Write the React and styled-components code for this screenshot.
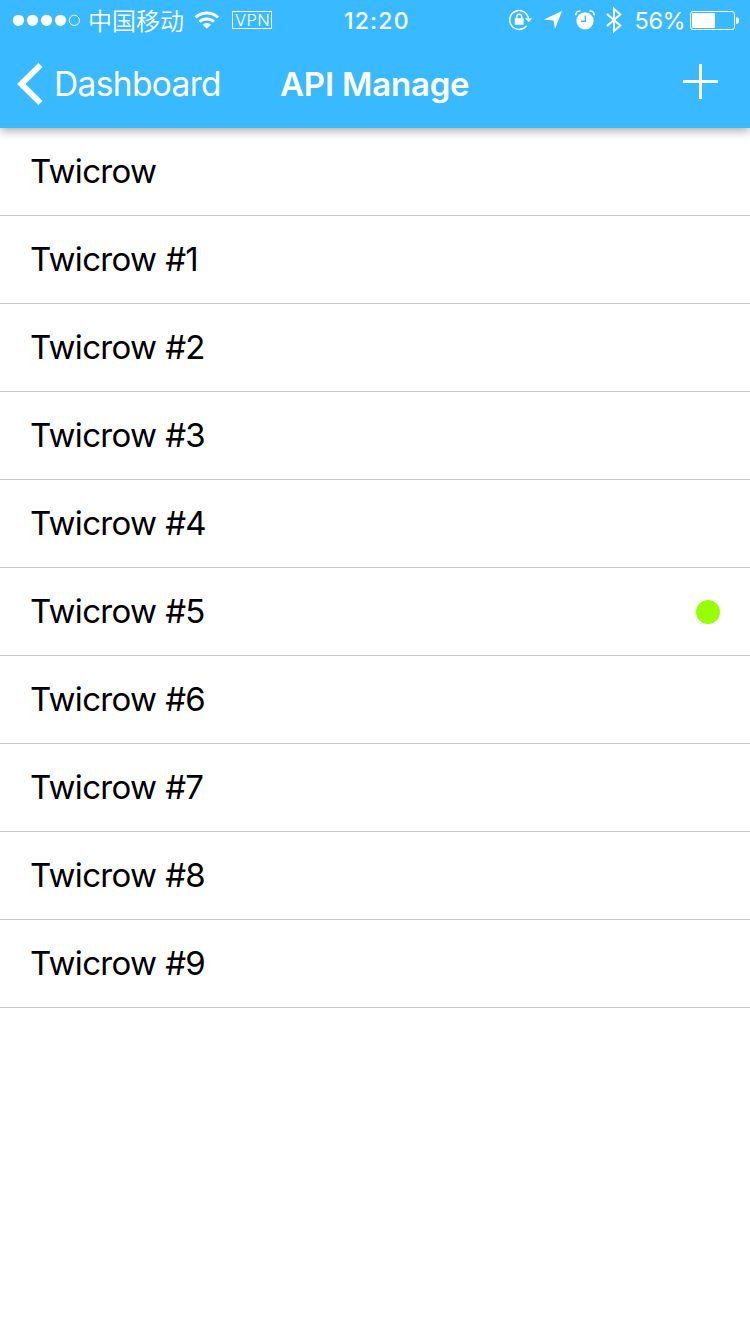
import React from 'react';
import styled, { createGlobalStyle } from 'styled-components';

const GlobalStyle = createGlobalStyle`
  *, *::before, *::after { box-sizing: border-box; }
  body {
    margin: 0;
    background: #fff;
    font-family: Inter, "Noto Sans CJK SC", sans-serif;
  }
`;

const Screen = styled.div`
  width: 750px;
  height: 1334px;
  overflow: hidden;
  background: #fff;
`;

const Header = styled.header`
  position: relative;
  height: 128px;
  background: #39b9ff;
  color: #fff;
  box-shadow: 0 3px 9px rgba(0, 0, 0, 0.33);
`;

const StatusBar = styled.div`
  display: grid;
  grid-template: 40px / 344px 66px 1fr;
  height: 40px;
  svg { display: block; flex: none; }
`;

const StatusGroup = styled.div`
  display: flex;
  align-items: center;
  padding-left: ${(p) => p.$inset}px;
`;

const StatusText = styled.span`
  flex: none;
  width: ${(p) => p.$width}px;
  margin-left: ${(p) => p.$gap || 0}px;
  font-size: ${(p) => p.$size || 24}px;
  font-weight: ${(p) => p.$weight || 400};
  letter-spacing: ${(p) => p.$spacing || 0}px;
  line-height: ${(p) => p.$leading || 40}px;
  white-space: nowrap;
`;

const Carrier = styled(StatusText)`
  padding-bottom: 1px;
  font-family: "Noto Sans CJK SC", sans-serif;
  font-weight: 350;
  line-height: 36px;
`;

const ChargeLevel = styled(StatusText)`
  padding-top: 2px;
`;

const Glyph = styled.svg`
  margin-left: ${(p) => p.$gap || 0}px;
`;

const VpnBadge = styled.span`
  flex: none;
  width: 40px;
  height: 18px;
  margin-left: 13px;
  padding-left: 2px;
  border: 1px solid #fff;
  font-size: 16.5px;
  font-weight: 350;
  line-height: 17px;
  letter-spacing: 0.4px;
`;

const NavBar = styled.nav`
  display: grid;
  grid-template-columns: 281px 1fr 67px;
  height: 88px;
`;

const BackButton = styled.button`
  display: flex;
  align-items: center;
  padding: 0 0 0 17px;
  border: 0;
  background: none;
  color: inherit;
  font: 370 33.5px/88px Inter, sans-serif;
  letter-spacing: -0.65px;
  white-space: nowrap;
  svg { display: block; margin-right: 11px; }
`;

const Title = styled.h1`
  margin: 0 0 0 -1px;
  font-size: 33px;
  font-weight: 570;
  line-height: 88px;
  letter-spacing: -0.2px;
`;

const AddButton = styled.button`
  padding: 0;
  border: 0;
  background: none;
  svg { display: block; margin-top: -5px; }
`;

const List = styled.ul`
  margin: 0;
  padding: 0;
  list-style: none;
`;

const Row = styled.li`
  display: flex;
  align-items: center;
  justify-content: space-between;
  height: 88px;
  padding: 0 30px;
  border-bottom: 1px solid #c8c7cc;
  color: #000;
  font-size: 33px;
  line-height: 87px;
  letter-spacing: -0.7px;
  word-spacing: 0.3px;
`;

const ActiveDot = styled.span`
  width: 24px;
  height: 24px;
  margin-top: 1px;
  border-radius: 50%;
  background: #96ff00;
`;

const Signal = () => (
  <svg width="68" height="12" viewBox="0 0 68 12" fill="#fff">
    {[5.5, 19.5, 33.5, 47.5].map((x) => <circle key={x} cx={x} cy="6.3" r="5.6" />)}
    <circle cx="61.4" cy="6.3" r="5.1" fill="none" stroke="#fff" />
  </svg>
);

const Wifi = () => (
  <Glyph $gap={9.5} width="25.5" height="18" viewBox="0 0 26 18" fill="none" stroke="#fff" strokeWidth="3">
    <path d="M1.5 6.5A16.5 16.5 0 0 1 24.5 6.5" />
    <path d="M5.7 10.8A10.6 10.6 0 0 1 20.3 10.8" />
    <path d="M8.7 13.8A6.2 6.2 0 0 1 17.3 13.8L13 18Z" fill="#fff" stroke="none" />
  </Glyph>
);

const RotationLock = () => (
  <svg width="24" height="22" viewBox="0 0 24 22" fill="none" stroke="#fff">
    <path d="M20.3 9A9.4 9.4 0 1 0 18.5 16.8" strokeWidth="1.5" />
    <path d="M17 9.2H24L20.7 13.2Z" fill="#fff" stroke="none" />
    <rect x="6.8" y="9.2" width="8.8" height="6.6" rx=".5" fill="#fff" stroke="none" />
    <path d="M8.7 9.5V7.7a2.5 2.5 0 0 1 5 0V9.5" strokeWidth="1.5" />
  </svg>
);

const Location = () => (
  <Glyph $gap={12} width="18" height="18" viewBox="0 0 18 18" fill="#fff">
    <path d="M18 0L11 18L9.6 9.6L0 8.6Z" />
  </Glyph>
);

const Alarm = () => (
  <Glyph $gap={12.5} width="20" height="20" viewBox="0 0 20 20" fill="none" stroke="#fff">
    <circle cx="10" cy="10.8" r="8.6" fill="#fff" stroke="none" />
    <path d="M.8 5.2C.6 2.5 2.8 .7 5.4 1.2M19.2 5.2C19.4 2.5 17.2 .7 14.6 1.2" strokeWidth="1.5" />
    <path d="M10.4 5.5V11.3H6" stroke="#39b9ff" strokeWidth="1.4" />
  </Glyph>
);

const Bluetooth = () => (
  <Glyph $gap={11.5} width="16" height="26" viewBox="0 0 16 26" fill="none" stroke="#fff" strokeWidth="2">
    <path d="M1 7L14.3 18.5L8 24V2L14.3 7.5L1 19" />
  </Glyph>
);

const Battery = () => (
  <Glyph $gap={6} width="49" height="20" viewBox="0 -1 49 20" fill="#fff">
    <rect x=".5" y=".5" width="44" height="18" rx="2.5" fill="none" stroke="#fff" />
    <rect x="2" y="2" width="23" height="15" rx="1" />
    <path d="M46 6.2C48.7 6.2 49 8 49 9.5S48.7 12.8 46 12.8Z" />
  </Glyph>
);

const items = ['Twicrow', ...Array.from({ length: 9 }, (_, i) => `Twicrow #${i + 1}`)];

export default function App() {
  return (
    <Screen>
      <GlobalStyle />
      <Header>
        <StatusBar>
          <StatusGroup $inset={13}>
            <Signal />
            <Carrier $gap={7} $width={96}>中国移动</Carrier>
            <Wifi />
            <VpnBadge>VPN</VpnBadge>
          </StatusGroup>
          <StatusText $width={66} $size={23} $weight={550} $spacing={1.2} $leading={42}>12:20</StatusText>
          <StatusGroup $inset={98}>
            <RotationLock />
            <Location />
            <Alarm />
            <Bluetooth />
            <ChargeLevel $gap={12.5} $width={49.5} $size={23.5} $spacing={-0.4} $leading={38}>56%</ChargeLevel>
            <Battery />
          </StatusGroup>
        </StatusBar>
        <NavBar>
          <BackButton>
            <svg width="26" height="42" viewBox="0 0 26 42" fill="#fff">
              <path d="M0 21L21.4 0L25.5 4L8.6 21L25.5 38L21.4 42Z" />
            </svg>
            Dashboard
          </BackButton>
          <Title>API Manage</Title>
          <AddButton aria-label="Add">
            <svg width="35" height="35" viewBox="0 0 35 35" stroke="#fff" strokeWidth="3">
              <path d="M17.5 0V35M0 17.5H35" />
            </svg>
          </AddButton>
        </NavBar>
      </Header>
      <List>
        {items.map((name, i) => (
          <Row key={name}>
            {name}
            {i === 5 && <ActiveDot />}
          </Row>
        ))}
      </List>
    </Screen>
  );
}
